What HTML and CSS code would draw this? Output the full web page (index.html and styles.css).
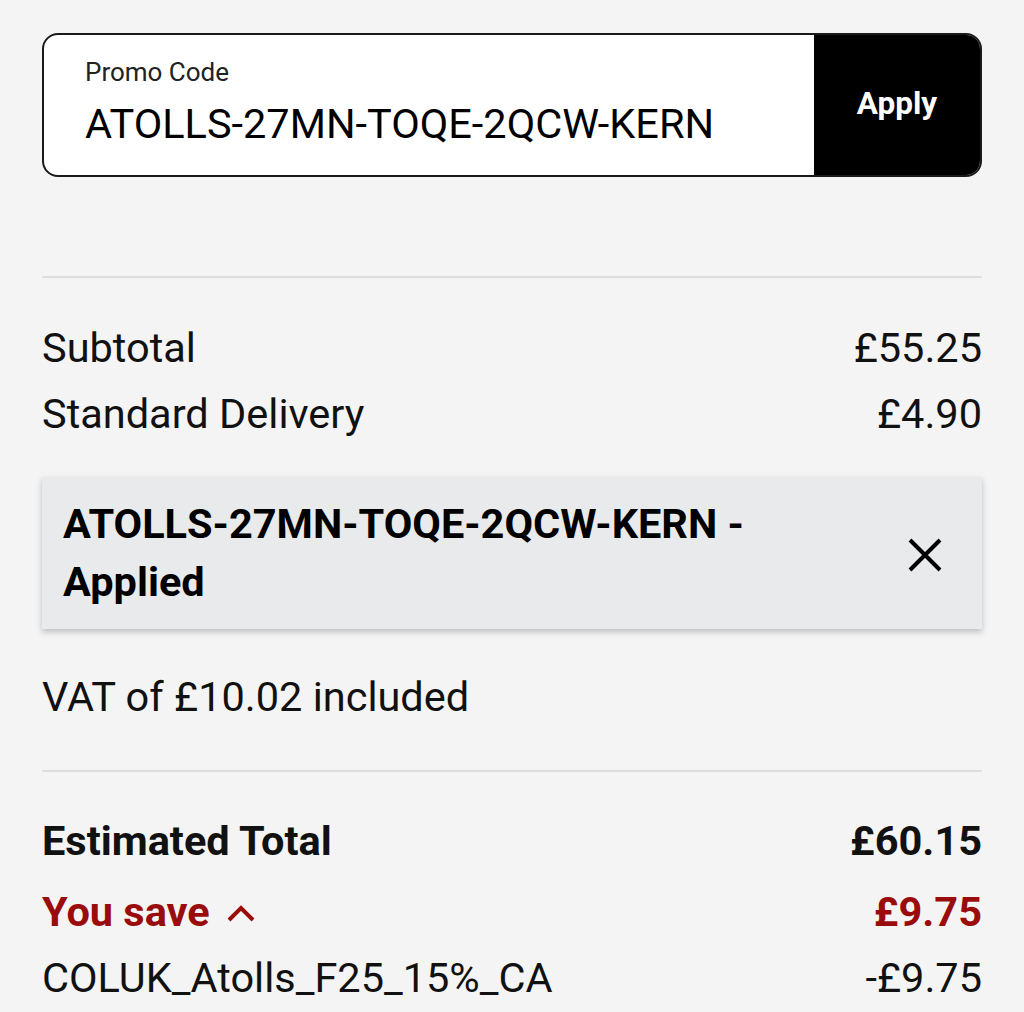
FILE: index.html
```html
<!DOCTYPE html>
<html>
<head>
<meta charset="utf-8">
<link rel="stylesheet" href="styles.css">
</head>
<body>
<div class="page">
  <div class="promo">
    <div class="field">
      <div class="label">Promo Code</div>
      <div class="value">ATOLLS-27MN-TOQE-2QCW-KERN</div>
    </div>
    <div class="apply">Apply</div>
  </div>
  <hr class="divider first">
  <div class="row"><span>Subtotal</span><span>£55.25</span></div>
  <div class="row"><span>Standard Delivery</span><span>£4.90</span></div>
  <div class="applied">
    <div class="applied-text">ATOLLS-27MN-TOQE-2QCW-KERN - Applied</div>
    <svg class="close" width="36" height="36" viewBox="0 0 36 36"><path d="M3 3 L33 33 M33 3 L3 33" stroke="#000" stroke-width="4" fill="none"/></svg>
  </div>
  <div class="row vat"><span>VAT of £10.02 included</span></div>
  <hr class="divider second">
  <div class="row total"><span>Estimated Total</span><span>£60.15</span></div>
  <div class="row save"><span class="save-label">You save <svg class="chev" width="30" height="20" viewBox="0 0 30 20"><path d="M3 17 L15 5 L27 17" stroke="#9a0c0c" stroke-width="4" fill="none"/></svg></span><span>£9.75</span></div>
  <div class="row code"><span>COLUK_Atolls_F25_15%_CA</span><span>-£9.75</span></div>
</div>
</body>
</html>
```
FILE: styles.css
```css
html, body {
  margin: 0;
  padding: 0;
  background: #f4f4f4;
}
body {
  font-family: Roboto, "Liberation Sans", sans-serif;
  color: #111;
}
.page {
  padding: 33px 42px 0 42px;
}
.promo {
  display: flex;
  height: 144px;
  box-sizing: border-box;
  border: 2px solid #1a1a1a;
  border-radius: 16px;
  overflow: hidden;
  background: #fff;
}
.field {
  flex: 1;
  padding: 20px 0 0 41px;
}
.label {
  font-size: 26px;
  line-height: 34px;
  color: #222;
}
.value {
  font-size: 41.5px;
  line-height: 50px;
  margin-top: 10px;
  color: #000;
}
.apply {
  width: 166px;
  background: #000;
  color: #fff;
  font-weight: 700;
  font-size: 31.5px;
  display: flex;
  align-items: center;
  justify-content: center;
  padding-bottom: 4px;
}
.divider {
  border: none;
  border-top: 2px solid #dedede;
  margin: 0;
}
.divider.first {
  margin-top: 99px;
}
.row {
  display: flex;
  justify-content: space-between;
  font-size: 41.5px;
  line-height: 66px;
}
.divider.first + .row {
  margin-top: 37px;
}
.applied {
  margin-top: 30px;
  background: #e9eaeb;
  box-shadow: 0 3px 6px rgba(0,0,0,0.22);
  display: flex;
  align-items: center;
  padding: 18px 39px 18px 21px;
  height: 152px;
  box-sizing: border-box;
}
.applied-text {
  flex: 1;
  font-weight: 700;
  font-size: 41.5px;
  line-height: 58px;
  padding-right: 100px;
  color: #000;
}
.close {
  flex: none;
  margin-top: 4px;
}
.vat {
  margin-top: 35px;
}
.divider.second {
  margin-top: 40px;
}
.total {
  margin-top: 36px;
  font-weight: 700;
}
.save {
  margin-top: 5px;
  font-weight: 700;
  color: #9a0c0c;
}
.save-label {
  display: flex;
  align-items: center;
  gap: 16px;
}
.chev {
  margin-top: 2px;
}
```
